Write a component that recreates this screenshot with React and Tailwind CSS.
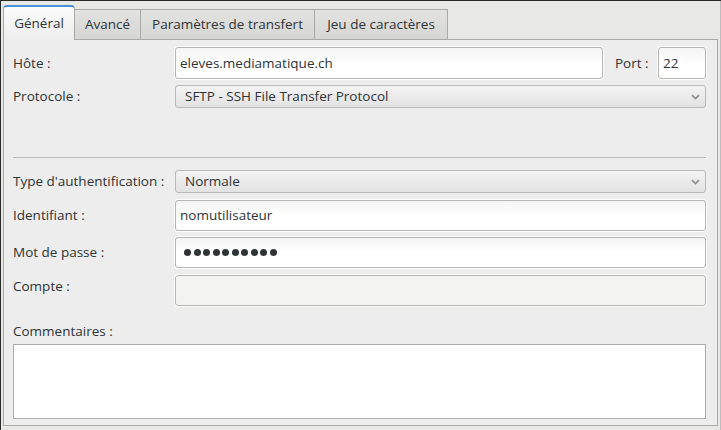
import React from 'react'

const font = { fontFamily: '"Open Sans", "DejaVu Sans", sans-serif' }

function Chevron() {
  return (
    <svg width="9" height="6" viewBox="0 0 9 6" className="shrink-0">
      <polyline points="1,1.2 4.5,4.5 8,1.2" fill="none" stroke="#8f8f8f" strokeWidth="1.7" />
    </svg>
  )
}

function Entry({ value, disabled, className = '', children }) {
  return (
    <div className={`rounded-[3px] border border-[#b6b6b3] shadow-[0_0_0_1px_#fdfdfd] flex items-center px-[4px] text-[13.5px] text-[#2e3436] ${disabled ? 'bg-[#f3f3f1]' : 'bg-gradient-to-b from-[#f4f4f4] via-[#ffffff] to-[#ffffff]'} ${className}`}>
      {children ?? value}
    </div>
  )
}

function Select({ value, className = '' }) {
  return (
    <div className={`rounded-[3px] border border-[#b9b9b6] bg-gradient-to-b from-[#f4f4f4] to-[#e2e2e2] flex items-center justify-between pl-[9px] pr-[5px] text-[13.5px] text-[#2e3436] ${className}`}>
      <span>{value}</span>
      <Chevron />
    </div>
  )
}

function Row({ label, children, className = '', labelClass = '' }) {
  return (
    <div className={`flex items-center ${className}`}>
      <div className={`w-[162px] shrink-0 text-[13.5px] text-[#2e3436] ${labelClass}`}>{label}</div>
      {children}
    </div>
  )
}

export default function App() {
  const tabs = ['Avancé', 'Paramètres de transfert', 'Jeu de caractères']
  const widths = ['w-[66px]', 'w-[174px]', 'w-[133px]']
  return (
    <div className="w-[721px] h-[430px] bg-[#e8e8e7] border-l border-t border-[#2a2a2a] overflow-hidden relative" style={font}>
      {/* Tabs */}
      <div className="flex items-end h-[38px] pl-[2px]">
        <div className="w-[72px] h-[35px] rounded-t-[4px] border border-b-0 border-[#a9a9a6] border-t-2 border-t-[#4a90d9] bg-gradient-to-b from-[#fbfbfb] to-[#ededed] flex items-center justify-center text-[13.5px] text-[#2e3436] relative z-10 -mb-[1px] pb-[1px]">
          Général
        </div>
        {tabs.map((t, i) => (
          <div key={t} className={`${widths[i]} h-[30px] border border-l-0 border-b-0 border-[#a9a9a6] bg-gradient-to-b from-[#e3e3e2] to-[#d5d5d3] flex items-center justify-center text-[13.5px] text-[#2e3436]`}>
            {t}
          </div>
        ))}
      </div>

      {/* Panel */}
      <div className="ml-[2px] w-[715px] h-[387px] border border-[#a9a9a6] bg-[#ededed] px-[9px] pt-[7px] flex flex-col">
        <Row label="Hôte :">
          <Entry value="eleves.mediamatique.ch" className="w-[428px] h-[32px]" />
          <span className="ml-[12px] w-[43px] text-[13.5px] text-[#2e3436]">Port :</span>
          <Entry value="22" className="w-[48px] h-[32px]" />
        </Row>
        <Row label="Protocole :" className="mt-[6px]">
          <Select value="SFTP - SSH File Transfer Protocol" className="w-[531px] h-[23px]" />
        </Row>
        <div className="mt-[49px] h-px bg-[#bdbdbb] w-[693px]" />
        <Row label="Type d'authentification :" className="mt-[12px]">
          <Select value="Normale" className="w-[531px] h-[23px]" />
        </Row>
        <Row label="Identifiant :" className="mt-[7px]">
          <Entry value="nomutilisateur" className="w-[531px] h-[31px]" />
        </Row>
        <Row label="Mot de passe :" className="mt-[6px]">
          <Entry className="w-[531px] h-[31px] px-[6px]">
            <div className="flex gap-[2.5px] pl-[2px]">
              {Array.from({ length: 10 }).map((_, i) => (
                <span key={i} className="w-[7px] h-[7px] rounded-full bg-[#2e3436]" />
              ))}
            </div>
          </Entry>
        </Row>
        <Row label="Compte :" className="mt-[7px]" labelClass="pb-[8px]">
          <Entry disabled className="w-[531px] h-[31px]" />
        </Row>
        <div className="mt-[15px] text-[13.5px] text-[#2e3436] leading-[20px]">Commentaires :</div>
        <div className="mt-[3px] w-[693px] h-[75px] border border-[#acacaa] bg-white" />
      </div>
      <div className="absolute right-0 top-0 bottom-0 w-px bg-[#bcbcbc]" />
    </div>
  )
}
